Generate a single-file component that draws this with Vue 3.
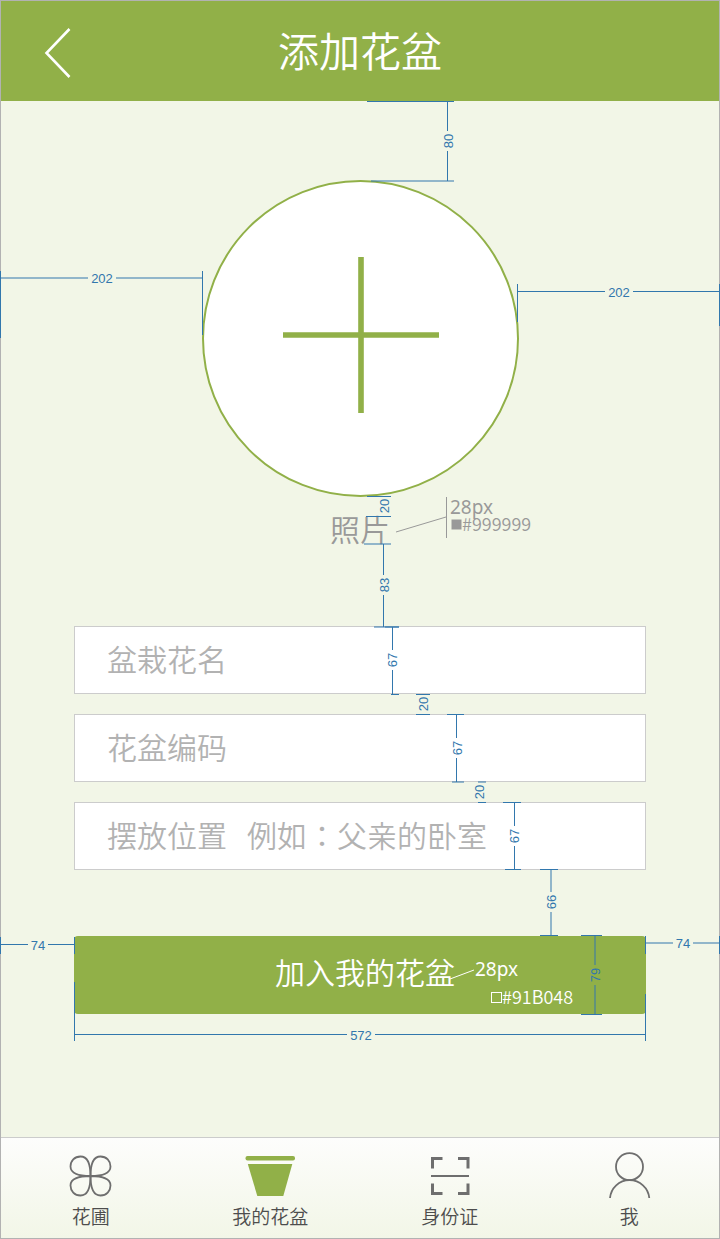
<script setup>
import { ref } from 'vue'

const fields = [
  { id: 'name', placeholder: '盆栽花名' },
  { id: 'code', placeholder: '花盆编码' },
  { id: 'place', placeholder: '摆放位置   例如：父亲的卧室' },
]
const values = ref({ name: '', code: '', place: '' })

// Vertical dimensions: line from y1 to y2, end caps spanning [x1, x2]
const rows = [
  { x: 447.5, y1: 101.5, y2: 181, top: [367, 454], bottom: [371, 454], label: '80', lx: 448, ly: 141 },
  { x: 0, y1: 496.5, y2: 516.5, top: [367, 391], bottom: [366, 391], label: '20', lx: 384, ly: 506 },
  { x: 383.5, y1: 544, y2: 627, top: [364, 391], bottom: [374, 399], label: '83', lx: 384, ly: 585 },
  { x: 392.5, y1: 627, y2: 694.5, top: [385, 399], bottom: [391, 399], label: '67', lx: 392, ly: 660 },
  { x: 0, y1: 694.5, y2: 714.5, top: [416, 430], bottom: [416, 430], label: '20', lx: 423, ly: 704 },
  { x: 456.5, y1: 714.5, y2: 782, top: [447, 464], bottom: [452, 464], label: '67', lx: 457, ly: 748 },
  { x: 0, y1: 782, y2: 802.5, top: [478, 486], bottom: [478, 486], label: '20', lx: 479, ly: 792 },
  { x: 514.5, y1: 802.5, y2: 869.5, top: [503, 521], bottom: [505, 521], label: '67', lx: 514, ly: 836 },
  { x: 551, y1: 869.5, y2: 935.5, top: [540, 558], bottom: [540, 558], label: '66', lx: 551, ly: 902 },
  { x: 595, y1: 935.5, y2: 1014.5, top: [581, 602], bottom: [581, 602], label: '79', lx: 595, ly: 975 },
]

// Horizontal dimensions: line from x1 to x2, end ticks spanning [y1, y2]
const cols = [
  { y: 278, x1: 0.5, x2: 202.5, left: [271, 338], right: [271, 335], label: '202', lx: 102, gap: 14 },
  { y: 291.5, x1: 517.5, x2: 719.5, left: [284, 322], right: [284, 326], label: '202', lx: 619, gap: 14 },
  { y: 944.5, x1: 0.5, x2: 74.5, left: [937, 954], right: [937, 954], label: '74', lx: 38, gap: 10 },
  { y: 943, x1: 645.5, x2: 719.5, left: [936, 954], right: [936, 954], label: '74', lx: 683, gap: 10 },
  { y: 1034.5, x1: 74.5, x2: 645.5, left: [982, 1041], right: [994, 1041], label: '572', lx: 361, gap: 14 },
]
</script>

<template>
  <div class="page">
    <header class="bar">
      <button class="back" type="button" aria-label="返回">
        <svg width="30" height="54" viewBox="0 0 30 54" fill="none" stroke="#fff" stroke-width="2.6">
          <path d="M26.5 5 3.5 29l23 24" />
        </svg>
      </button>
      <h1>添加花盆</h1>
    </header>

    <main class="content">
      <button class="photo" type="button" aria-label="添加照片">
        <svg width="158" height="158" viewBox="0 0 158 158" stroke="#91b048" stroke-width="5.6">
          <path d="M80 0v156M2 78h156" />
        </svg>
      </button>
      <p class="caption">照片</p>

      <form class="form" @submit.prevent>
        <input
          v-for="f in fields"
          :key="f.id"
          v-model="values[f.id]"
          class="field"
          :class="f.id"
          type="text"
          :name="f.id"
          :aria-label="f.placeholder"
          :placeholder="f.placeholder"
        />
        <button class="submit" type="submit">加入我的花盆</button>
      </form>
    </main>

    <nav class="tabs">
      <a class="tab" href="#garden">
        <svg width="50" height="48" viewBox="1 0 50 48" fill="none" stroke="#6e6e6e" stroke-width="1.8">
          <path d="M25.5 24C25.5 13 23 4.5 15.5 4.5C9.5 4.5 5.5 9 5.5 14.5C5.5 21.5 14 24 25.5 24" />
          <path d="M25.5 24C25.5 13 28 4.5 35.5 4.5C41.5 4.5 45.5 9 45.5 14.5C45.5 21.5 37 24 25.5 24" />
          <path d="M25.5 24C25.5 35 23 43.5 15.5 43.5C9.5 43.5 5.5 39 5.5 33.5C5.5 26.5 14 24 25.5 24" />
          <path d="M25.5 24C25.5 35 28 43.5 35.5 43.5C41.5 43.5 45.5 39 45.5 33.5C45.5 26.5 37 24 25.5 24" />
        </svg>
        <span>花圃</span>
      </a>
      <a class="tab" href="#pots" aria-current="page">
        <svg width="50" height="48" viewBox="0 0 50 48" fill="#91b048">
          <rect x="0.5" y="4" width="49.5" height="4.5" rx="2" />
          <path d="M2.8 12h44.5L38.3 44H12.3z" />
        </svg>
        <span>我的花盆</span>
      </a>
      <a class="tab" href="#identity">
        <svg width="50" height="48" viewBox="0 0 50 48" fill="none" stroke="#6e6e6e" stroke-width="3">
          <path d="M7.5 16.5V6.5h10M33 6.5h10v10M43 31.5v10H33M17.5 41.5h-10v-10" />
          <path d="M6 24h38" stroke-width="2" />
        </svg>
        <span>身份证</span>
      </a>
      <a class="tab" href="#me">
        <svg width="50" height="48" viewBox="-1 0 50 48" fill="none" stroke="#6e6e6e" stroke-width="1.8">
          <circle cx="24.5" cy="14.7" r="13.5" />
          <path d="M5 46C6 36 14 28.2 24.5 28.2S43.3 36 44.3 46" />
        </svg>
        <span>我</span>
      </a>
    </nav>

    <svg class="marks" viewBox="0 0 720 1239" preserveAspectRatio="xMidYMin meet">
      <g v-for="(d, i) in rows" :key="'r' + i">
        <path class="rule" :d="`M${d.top[0]} ${d.y1}H${d.top[1]}M${d.bottom[0]} ${d.y2}H${d.bottom[1]}`" />
        <path v-if="d.x" class="rule" :d="`M${d.x} ${d.y1}V${d.ly - 10}M${d.x} ${d.ly + 10}V${d.y2}`" />
        <text class="size" :transform="`translate(${d.lx + 5} ${d.ly}) rotate(-90)`">{{ d.label }}</text>
      </g>
      <g v-for="(d, i) in cols" :key="'c' + i">
        <path class="rule" :d="`M${d.x1} ${d.left[0]}V${d.left[1]}M${d.x2} ${d.right[0]}V${d.right[1]}`" />
        <path class="rule" :d="`M${d.x1} ${d.y}H${d.lx - d.gap}M${d.lx + d.gap} ${d.y}H${d.x2}`" />
        <text class="size" :x="d.lx" :y="d.y + 5">{{ d.label }}</text>
      </g>

      <g class="note grey">
        <path d="M446.5 497v41M396 532l50-15" />
        <rect class="solid" x="452" y="520" width="9" height="9" />
        <text class="px" x="450" y="514">28px</text>
        <text class="hex" x="462" y="531">#999999</text>
      </g>
      <g class="note white">
        <path d="M450 979l24-9" />
        <rect x="491.5" y="992.5" width="10" height="10" />
        <text class="px" x="475" y="976">28px</text>
        <text class="hex" x="502" y="1004">#91B048</text>
      </g>
    </svg>
  </div>
</template>

<style>
body {
  margin: 0;
}
</style>

<style scoped>
.page {
  position: relative;
  display: flex;
  flex-direction: column;
  box-sizing: border-box;
  min-height: 100vh;
  border: 1px solid #b2b2b2;
  background: #f2f6e7;
  font-family: "Noto Sans CJK SC", sans-serif;
  font-weight: 350;
}
.bar {
  display: grid;
  grid-template-columns: 80px 1fr 80px;
  align-items: center;
  height: 100px;
  background: #91b048;
  color: #fff;
}
.back {
  display: flex;
  padding: 0 0 0 42px;
  border: 0;
  background: none;
  cursor: pointer;
}
h1 {
  margin: 0;
  padding-bottom: 4px;
  font-size: 41px;
  font-weight: inherit;
  line-height: 60px;
  text-align: center;
}
.content {
  display: flex;
  flex-direction: column;
  align-items: center;
  padding: 79px 73px 40px;
}
.photo {
  display: flex;
  justify-content: center;
  box-sizing: border-box;
  width: 317px;
  height: 317px;
  padding: 75px 0 0;
  border: 2px solid #91b048;
  border-radius: 50%;
  background: #fff;
  cursor: pointer;
}
.caption {
  margin: 9px 0 76px;
  color: #999;
  font-size: 30px;
  line-height: 44px;
}
.form {
  display: flex;
  flex-direction: column;
  gap: 20px;
  width: 100%;
}
.field {
  box-sizing: border-box;
  width: 100%;
  height: 68px;
  padding: 0 32px 4px;
  border: 1px solid #ccc;
  border-radius: 0;
  outline: 0;
  background: #fff;
  color: #666;
  font: inherit;
  font-size: 30px;
}
/* centred full-width colon */
.place {
  font-family: "Noto Sans CJK TC", "Noto Sans CJK SC", sans-serif;
}
.field::placeholder {
  color: #b2b2b2;
  opacity: 1;
}
.submit {
  height: 78px;
  margin-top: 46px;
  padding: 0 0 8px 10px;
  border: 0;
  border-radius: 4px;
  background: #91b048;
  color: #fff;
  font: inherit;
  font-size: 30px;
  cursor: pointer;
}
.tabs {
  display: grid;
  grid-template-columns: repeat(4, 1fr);
  margin-top: auto;
  padding: 14px 0 8px;
  border-top: 1px solid #ccc;
  background: linear-gradient(#fdfdfc, #f2f6e7);
}
.tab {
  display: flex;
  flex-direction: column;
  align-items: center;
  gap: 2px;
  color: #4d4d4d;
  font-size: 19px;
  line-height: 28px;
  text-decoration: none;
}
.marks {
  position: absolute;
  top: -1px;
  left: -1px;
  width: calc(100% + 2px);
  height: 1239px;
  pointer-events: none;
}
.rule {
  fill: none;
  stroke: #3277ad;
}
.size {
  fill: #3277ad;
  font: 13px "Liberation Sans", Arial, sans-serif;
  text-anchor: middle;
}
.note {
  fill: none;
}
.grey {
  stroke: #999;
}
.white {
  stroke: #fff;
}
.grey text,
.solid {
  fill: #999;
}
.white text {
  fill: #fff;
}
.note text {
  stroke: none;
}
.px {
  font: 19px "Noto Sans", sans-serif;
}
.hex {
  font-size: 18px;
}
</style>
